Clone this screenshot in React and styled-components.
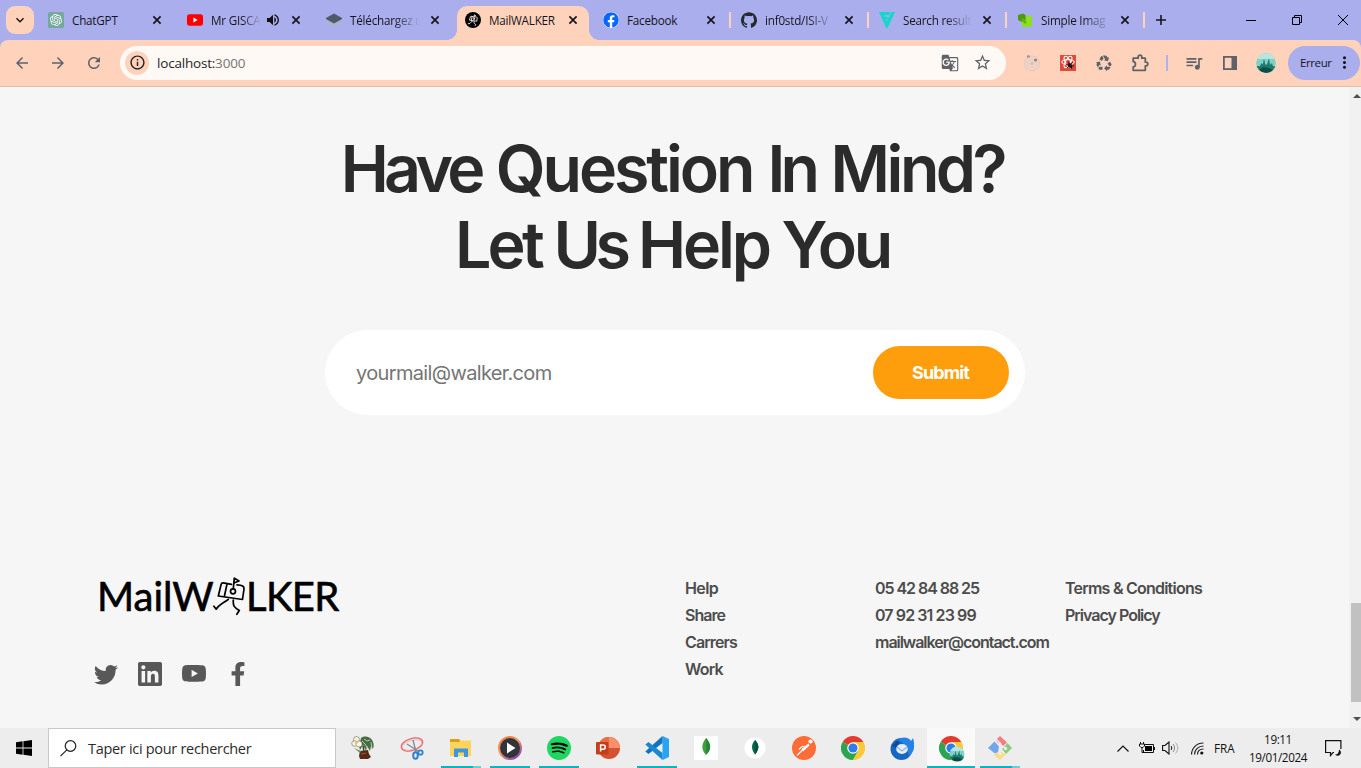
import React from "react";
import styled, { createGlobalStyle, css } from "styled-components";
import { SiOpenai, SiLinkedin, SiGithub, SiSpotify } from "react-icons/si";
import { FaFacebook, FaFacebookF } from "react-icons/fa";
import { BsTwitter, BsYoutube } from "react-icons/bs";
import {
  MdArrowBack, MdArrowForward, MdRefresh, MdInfoOutline, MdGTranslate, MdStarBorder,
  MdQueueMusic, MdMoreVert, MdRecycling, MdVolumeUp, MdExpandMore,
} from "react-icons/md";

const ui = `"Open Sans", "Noto Sans", sans-serif`;
const brand = `Inter, "Liberation Sans", sans-serif`;

const Global = createGlobalStyle`
  * { box-sizing: border-box; }
  html, body { margin: 0; height: 768px; overflow: hidden; }
  svg { display: block; flex: none; }
`;

const Screen = styled.div`
  width: 1361px; height: 768px; overflow: hidden;
  display: flex; flex-direction: column;
  background: #f6f6f6; font-family: ${ui}; color: #1f1f1f;
`;

/* tab strip */
const TabStrip = styled.div`
  height: 40px; flex: none; display: flex; align-items: stretch; overflow: hidden;
  background: #abaeed; padding-left: 6px;
`;
const TabSearch = styled.div`
  width: 28px; height: 28px; margin: 6px 6px 0 0; border-radius: 9px; background: #ffd3bb;
  display: flex; align-items: center; justify-content: center; color: #111; flex: none;
`;
const TabBox = styled.div`
  width: ${(p) => p.$w}px; flex: none; display: flex; align-items: center; position: relative; padding-left: 8px;
`;
const ActiveShape = styled.div`
  position: absolute; left: 0; top: 6px; width: 132px; height: 34px; background: #ffd3bb; border-radius: 10px 10px 0 0;
  &::before, &::after {
    content: ""; position: absolute; bottom: 0; width: 10px; height: 10px;
  }
  &::before { left: -10px; background: radial-gradient(circle at 0 0, transparent 9.6px, #ffd3bb 10px); }
  &::after { right: -10px; background: radial-gradient(circle at 100% 0, transparent 9.6px, #ffd3bb 10px); }
`;
const TabIcon = styled.div`
  width: 16px; height: 16px; flex: none; position: relative;
`;
const TabTitle = styled.div`
  width: ${(p) => p.$w}px; flex: none; margin-left: 8px; overflow: hidden; white-space: nowrap; position: relative;
  font-size: 11.7px; line-height: 18px; color: #15151c; letter-spacing: -0.22px;
  ${(p) => p.$fade && css`mask-image: linear-gradient(90deg, #000 62%, transparent);`}
`;
const TabTail = styled.div`
  display: flex; align-items: center; position: relative; margin-left: ${(p) => p.$ml ?? 7}px; color: #111;
`;
const TabSep = styled.div`
  width: 2px; height: 16px; background: #ffd3bb; margin-left: 10px;
`;
const NewTab = styled.div`
  width: 28px; flex: none; display: flex; align-items: center; justify-content: center;
`;
const WindowControls = styled.div`
  display: flex; flex: none; margin-left: 53px;
`;
const Control = styled.div`
  width: 46px; flex: none; display: flex; align-items: center; justify-content: center;
`;

/* toolbar */
const ToolbarWrap = styled.div`
  background: #abaeed; flex: none;
`;
const Toolbar = styled.div`
  height: 47px; display: flex; align-items: center; padding: 0 0 1px 4px;
  background: #ffd3bb; border-bottom: 1px solid #dcc0b1; border-radius: 8px 8px 0 0; color: #5f6368;
`;
const ToolCell = styled.div`
  width: ${(p) => p.$w || 36}px; height: 36px; flex: none; display: flex; align-items: center; justify-content: center; color: #5f6368;
`;
const AddressBar = styled.div`
  width: 886px; height: 34px; margin: 0 8px; flex: none; border-radius: 17px; background: #fff9f5;
  display: flex; align-items: center; padding: 0 8px 0 5px;
`;
const SiteInfo = styled.div`
  width: 24px; height: 24px; border-radius: 50%; background: #ffd3bb; color: #222; display: flex; align-items: center; justify-content: center;
`;
const Url = styled.div`
  flex: 1; margin-left: 8px; font-size: 13.5px; color: #1f1f1f; letter-spacing: -0.2px;
  span { color: #777472; }
`;
const ToolSep = styled.div`
  width: 18px; display: flex; justify-content: center;
  &::after { content: ""; width: 2px; height: 16px; background: #b0b0ea; }
`;
const Avatar = styled.div`
  width: 20px; height: 20px; border-radius: 50%; overflow: hidden;
`;
const ErrorPill = styled.div`
  width: 72px; height: 34px; border-radius: 17px; background: #abaeed; margin-left: 4px; flex: none;
  display: flex; align-items: center; padding-left: 12px; font-size: 11.5px; color: #15151c;
`;
const PillText = styled.span`
  width: 35px; letter-spacing: -0.4px;
`;

/* page */
const Viewport = styled.div`
  height: 641px; flex: none; display: flex;
`;
const Page = styled.main`
  width: 1349px; flex: none; font-family: ${brand};
`;
const Headline = styled.h1`
  margin: 44px 0 0; text-align: center; font-size: 64.5px; line-height: 76px; font-weight: 600; color: #2b2b2b;
`;
const HeadLine = styled.div`
  white-space: nowrap; letter-spacing: -4px; word-spacing: ${(p) => p.$ws}px; padding-right: 4px;
`;
const Word = styled.span`
  letter-spacing: ${(p) => p.$ls}px;
`;
const Form = styled.div`
  width: 700px; height: 85px; margin: 47px 0 0 325px; border-radius: 42.5px; background: #fff;
  display: flex; align-items: center; justify-content: space-between; padding: 0 16px 0 31px;
`;
const Placeholder = styled.span`
  font-size: 20px; color: #757575; letter-spacing: -0.65px; white-space: nowrap;
`;
const Submit = styled.div`
  width: 136px; height: 53px; border-radius: 26.5px; background: #ff9e0d; color: #fff; font-weight: 700; font-size: 18px;
  display: flex; align-items: center; justify-content: center; letter-spacing: -0.9px; padding-right: 1px;
`;
const Footer = styled.footer`
  display: flex; margin-top: 160px; padding-left: 94px;
`;
const FooterBrand = styled.div`
  width: 591px; flex: none;
`;
const Logo = styled.div`
  display: flex; align-items: center; height: 42px; padding-left: 3px; color: #000; font-family: Lato, "Open Sans", sans-serif; font-size: 40px; line-height: 42px;
  -webkit-text-stroke: 0.6px #000;
`;
const LogoPart = styled.span`
  width: ${(p) => p.$w}px; letter-spacing: ${(p) => p.$ls}px; white-space: nowrap;
`;
const Socials = styled.div`
  display: flex; gap: 20px; margin-top: 45px; color: #585858;
`;
const FooterCol = styled.div`
  width: 190px; font-size: 16px; line-height: 27px; font-weight: 600; color: #4c4c4c;
`;
const FooterLink = styled.div`
  white-space: nowrap; letter-spacing: ${(p) => p.$ls}px;
`;
const Scrollbar = styled.div`
  width: 12px; flex: none; background: #f1f1f1; display: flex; flex-direction: column; align-items: flex-end; padding-top: 6px;
`;
const Thumb = styled.div`
  width: 10px; height: 99px; background: #c1c1c1; margin: 504px 0 14px;
`;

/* taskbar */
const Taskbar = styled.div`
  height: 40px; flex: none; background: #ededed; display: flex; align-items: stretch;
`;
const StartCell = styled.div`
  width: 48px; display: flex; align-items: center; justify-content: center;
`;
const SearchBox = styled.div`
  width: 288px; border: 1px solid #c8c8c8; background: #fff; display: flex; align-items: center; padding-left: 11px;
  font-size: 14.5px; color: #2b2b2b; margin-right: 3px;
`;
const SearchText = styled.span`
  margin-left: 11px; white-space: nowrap; letter-spacing: -0.3px;
`;
const AppCell = styled.div`
  width: 48px; margin-right: 1px; flex: none; display: flex; flex-direction: column; align-items: center; padding-top: 8px;
  background: ${(p) => (p.$active ? "#f9f9f9" : "transparent")};
`;
const AppIcon = styled.div`
  height: 24px; display: flex; justify-content: center;
`;
const Running = styled.div`
  width: ${(p) => (p.$full ? 48 : 40)}px; height: 2px; margin-top: 6px;
  background: ${(p) => (p.$stack ? "linear-gradient(90deg, #00b7c3 32px, #66d0d4 32px)" : "#00b7c3")};
`;
const Tray = styled.div`
  flex: 1; display: flex; align-items: center; padding-left: 90px; font-size: 11.7px; color: #111;
`;
const TrayIcon = styled.div`
  width: ${(p) => p.$w}px; flex: none; display: flex; justify-content: center;
`;
const Lang = styled.div`
  margin-left: -2px; width: 24px;
`;
const Clock = styled.div`
  width: 80px; text-align: center; line-height: 18px; white-space: nowrap; letter-spacing: -0.4px; padding-bottom: 1px;
`;

const Close = () => (
  <svg width="16" height="16" viewBox="0 0 16 16"><path d="M4.400 4.400l7.200 7.200M11.600 4.400l-7.200 7.200" stroke="#15151c" strokeWidth="1.700" fill="none" /></svg>
);
const OpenAITile = () => (
  <svg width="16" height="16" viewBox="0 0 16 16"><rect width="16" height="16" rx="1.500" fill="#74a99b" /><SiOpenai x="2" y="2" size={12} color="#fff" /></svg>
);
const YouTubeMark = () => (
  <svg width="16" height="16" viewBox="0 0 16 16"><rect y="2.300" width="16" height="11.400" rx="2.600" fill="#f00" /><path d="M6.400 5.600v4.800l4.200-2.400z" fill="#fff" /></svg>
);
const LayersMark = () => (
  <svg width="16" height="16" viewBox="0 0 16 16"><path d="M0 7l8 4.500L16 7v2l-8 6-8-6z" fill="#aab4c4" /><path d="M8 1.500l8 4.500v1l-8 4.500L0 7V6z" fill="#4c5a69" /></svg>
);
const Walker = (props) => (
  <g fill="none" strokeLinejoin="round" strokeLinecap="round" {...props}>
    <path d="M18.500 8.300L10.200 6.800c-1.300-.1-1.800.5-2.100 1.700L5.300 20l24.200 3.500L31 13c.3-2.700-1.500-4-7-4.200M14 8l-2.700 12.800" />
    <circle cx="20" cy="15.300" r="2.500" /><path d="M20.300 12.600l1-10.500 4.700 2.900-4.500 1.700" />
    <path d="M15.300 23.300C12.500 26 6.500 28 3.200 33.200L.9 30.200M20.300 24c-.5 6 1 7.500 6 10.500l-2.500 3.800" />
  </g>
);
const WalkerFavicon = () => (
  <svg width="16" height="16" viewBox="0 0 16 16"><circle cx="8" cy="8" r="8" fill="#000" /><g transform="translate(2.900 2.200) scale(.3)"><Walker stroke="#f5e8df" strokeWidth="3" /></g></svg>
);
const VMark = () => (
  <svg width="16" height="16" viewBox="0 0 16 16" fill="#15d6cc"><path d="M0 0h11.500L10 3.200H5.200l.7 1.600h3.300L8 7.600H6.900l.7 1.600L12.500 0H16L8.600 16H7.200z" /></svg>
);
const ResizerMark = () => (
  <svg width="16" height="16" viewBox="0 0 16 16"><path d="M1 3l5-1.500L8.500 3 9 8l-3 2.500L1 8z" fill="#4c9a12" /><path d="M5 15V9.500L8.500 8l.5-4 1.500-1L12 5l1.500-2L15 5.500V14l-5 1z" fill="#8de01b" /><path d="M5 7l4 4" stroke="#5fb516" strokeWidth="2.500" /></svg>
);
const AvatarArt = ({ size = 20, ...rest }) => (
  <svg width={size} height={size} viewBox="0 0 20 20" {...rest}>
    <circle cx="10" cy="10" r="10" fill="#7fd0c6" /><path d="M1 6a10 10 0 0118 0z" fill="#b5e6df" />
    <path d="M.4 13L4 13l1.500-3 1.300 1.500L8 5.500l1.300 6h1.700L13 5l1 7 2-2 .8 3 2.700.5A10 10 0 01.4 13z" fill="#1e7a6d" />
    <path d="M3 17l4-3 6 1 4 2a10 10 0 01-14 0z" fill="#0b4e46" />
  </svg>
);
const OrbitMark = () => (
  <svg width="18" height="18" viewBox="0 0 18 18" fill="none"><circle cx="9" cy="9.500" r="7.300" stroke="#d9cdc8" strokeWidth="1.200" /><circle cx="9" cy="9.500" r="4.500" stroke="#d9cdc8" strokeWidth="1.100" /><circle cx="9" cy="9.500" r="2" fill="#c9c9cc" /><circle cx="5.300" cy="2.500" r="1.500" fill="#a39b98" /><circle cx="12.500" cy="6" r="1.600" fill="#8b8583" /></svg>
);
const ReactBug = () => (
  <svg width="16" height="16" viewBox="0 0 16 16"><rect width="16" height="16" fill="#dc4b3b" /><g fill="none" stroke="#fff" strokeWidth="1"><ellipse cx="8" cy="7" rx="6.300" ry="2.500" /><ellipse cx="8" cy="7" rx="6.300" ry="2.500" transform="rotate(60 8 7)" /><ellipse cx="8" cy="7" rx="6.300" ry="2.500" transform="rotate(-60 8 7)" /></g><ellipse cx="10" cy="10.500" rx="2" ry="2.800" fill="#2a1311" transform="rotate(-45 10 10.500)" /><path d="M6 9l3 1.500M7 13l2-2M12.500 7l-1.500 2M14 11h-3M12 14l-1-2M8 6.500l1.500 2" stroke="#2a1311" /></svg>
);
const Puzzle = () => (
  <svg width="18" height="18" viewBox="0 0 18 18"><path d="M2.200 4.200h5V3a1.800 1.800 0 013.600 0v1.200h3.500v4h.7a1.800 1.800 0 010 3.600h-.7v4.500H2.200v-3.500c3-.3 3-4.900 0-5.200z" fill="none" stroke="#5f6368" strokeWidth="1.800" strokeLinejoin="round" /></svg>
);
const SidePanel = () => (
  <svg width="14" height="14" viewBox="0 0 14 14"><rect x=".9" y=".9" width="12.200" height="12.200" fill="none" stroke="#5f6368" strokeWidth="1.800" /><path d="M8.500 0H14v14H8.500z" fill="#5f6368" /></svg>
);

const ChromeMark = ({ badge }) => (
  <svg width={badge ? 28 : 24} height={badge ? 26 : 24} viewBox={badge ? "-2 0 28 26" : "0 0 24 24"}>
    <path d="M12 12L1.600 6A12 12 0 0122.400 6z" fill="#e33b2e" />
    <path d="M12 12L1.600 6A12 12 0 0012 24l5.200-9z" fill="#2da44e" />
    <path d="M12 6h10.400A12 12 0 0112 24l5.200-9z" fill="#fcc934" />
    <circle cx="12" cy="12" r="5.800" fill="#fff" /><circle cx="12" cy="12" r="4.600" fill="#2f7de9" />
    {badge && <AvatarArt size={15} x="10.500" y="10.500" />}
  </svg>
);
const Plant = () => (
  <svg width="24" height="24" viewBox="0 0 24 24">
    <path d="M10 2c4-3 9-1 11 2 2 3 2 6 1 9l-2-3-1 5-3-5-1 5-3-6-3 5-1-4z" fill="#466c42" />
    <path d="M13 3l3 2 3-1M14 8l3 5M20 6l1 7M11 5l3 3" stroke="#b7cdb0" strokeWidth="1" fill="none" /><path d="M12 10l1 6" stroke="#31502d" strokeWidth="1.500" />
    <path d="M9 15l8-1 1 4 2 3-3 2H9l-1-3z" fill="#5a2a17" /><path d="M10 18l5-1" stroke="#a45b33" /><path d="M3 12l7 3-1 2z" fill="#6f944f" />
    <circle cx="5.500" cy="3.500" r="3" fill="#f4efe4" stroke="#77715c" strokeWidth=".6" /><circle cx="3.500" cy="7.500" r="2.800" fill="#f4efe4" stroke="#77715c" strokeWidth=".6" /><circle cx="8" cy="8" r="3" fill="#fff" stroke="#77715c" strokeWidth=".6" /><circle cx="5.500" cy="6.500" r="1.500" fill="#e8c64b" />
  </svg>
);
const Snip = () => (
  <svg width="24" height="24" viewBox="0 0 24 24" fill="none">
    <ellipse cx="12" cy="8.500" rx="11" ry="6" transform="rotate(-17 12 8.500)" stroke="#e8646a" strokeWidth="1.300" /><ellipse cx="12" cy="9" rx="10" ry="4.500" transform="rotate(-17 12 9)" stroke="#f3b2b4" strokeWidth=".8" />
    <path d="M13 4l3 12M7 8l11 7" stroke="#7d8890" strokeWidth="1.300" /><ellipse cx="15.500" cy="19.500" rx="2.300" ry="3.200" stroke="#2c82cc" strokeWidth="2" /><circle cx="20.500" cy="16.500" r="2.200" stroke="#2c82cc" strokeWidth="1.800" />
  </svg>
);
const Folder = () => (
  <svg width="24" height="24" viewBox="0 0 24 24"><path d="M1 3h9l1.500 2H22v3H1z" fill="#dd9f0c" /><path d="M1 6h9l2-1.500h10V20H1z" fill="#ffd45c" /><path d="M5 12.500h14V21h-4v-4.500H9V21H5z" fill="#3c97dc" /></svg>
);
const MediaPlayer = () => (
  <svg width="24" height="24" viewBox="0 0 24 24"><defs><linearGradient id="mp" x1="0" y1="0" x2=".7" y2="1"><stop offset="0" stopColor="#f0703a" /><stop offset=".5" stopColor="#f59b5e" /><stop offset="1" stopColor="#8345b0" /></linearGradient></defs><circle cx="12" cy="12" r="12" fill="url(#mp)" /><circle cx="12" cy="12" r="10" fill="#33343a" /><path d="M9 6.500v11l8.500-5.500z" fill="#fff" /></svg>
);
const SpotifyMark = () => (
  <svg width="24" height="24" viewBox="0 0 24 24"><circle cx="12" cy="12" r="11" fill="#000" /><SiSpotify size={24} color="#1ed760" /></svg>
);
const PowerPoint = () => (
  <svg width="24" height="24" viewBox="0 0 24 24"><circle cx="13" cy="12" r="11" fill="#d35230" /><path d="M13 1a11 11 0 0111 11H13z" fill="#ff8f6b" /><path d="M13 1a11 11 0 00-11 11h11z" fill="#ed6c47" /><rect y="6" width="12.500" height="12.500" rx="1" fill="#c43e1c" /><path d="M4.600 15.500V9h2.600a2 2 0 010 4.200H4.600" fill="none" stroke="#fff" strokeWidth="1.500" /></svg>
);
const VSCode = () => (
  <svg width="24" height="24" viewBox="0 0 24 24"><path d="M17.500 0L24 3v18l-6.500 3z" fill="#2aa3f0" /><path d="M17.500 0v7L3.500 18 .3 15.500z" fill="#0f74be" /><path d="M17.500 24v-7L3.500 6 .3 8.500z" fill="#1788d4" /></svg>
);
const LeafSquare = () => (
  <svg width="24" height="24" viewBox="0 0 24 24"><rect width="24" height="24" fill="#fff" /><path d="M12 2c5 5.500 6 11 .3 16.500L12 20l-.3-1.500C6.500 13 8 7 12 2z" fill="#3fa037" /><path d="M12 2c5 5.500 6 11 .3 16.500z" fill="#26853a" /></svg>
);
const LeafCircle = () => (
  <svg width="24" height="24" viewBox="0 0 24 24"><circle cx="12" cy="12" r="11" fill="#fff" stroke="#e4e4e4" strokeWidth=".5" /><path d="M12 4c4.500 5 4.500 9 0 14.500C8 13 8 9 12 4z" fill="#00684a" /><path d="M12 4c4.500 5 4.500 9 0 14.500z" fill="#08513d" /></svg>
);
const Postman = () => (
  <svg width="24" height="24" viewBox="0 0 24 24"><circle cx="12" cy="12" r="12" fill="#ff6c37" /><circle cx="18.500" cy="5.500" r="2.100" fill="#fff" /><path d="M16.500 7.500L9.500 13l1.500 2.500 6.500-6z" fill="#fff" /><path d="M10.500 14L5 19.500M12.500 10l-3 1L7 13.500" stroke="#fff" strokeWidth="1.200" fill="none" /></svg>
);
const Thunderbird = () => (
  <svg width="24" height="24" viewBox="0 0 24 24"><circle cx="11.500" cy="13" r="11" fill="#1766c2" /><path d="M8 4c4-4 11-3 13 1l2-3c2 7 2 14-4 18-1-7-5-13-11-16z" fill="#2482e6" /><path d="M1 9c2 0 4-1 5-4l4 1-4 6z" fill="#0f4b9d" /><ellipse cx="12" cy="13" rx="5.800" ry="5" fill="#e4eefa" /><path d="M7 11l5 4 5-4" stroke="#8fb2e0" strokeWidth="1.200" fill="none" /></svg>
);
const GitDiamond = () => (
  <svg width="24" height="24" viewBox="0 0 24 24"><path d="M12 0l7 6.500-4.500 4L10 7 8 4z" fill="#f57b81" /><path d="M6.500 5.500l4.500 5L10 16l-3 1.500L0 12z" fill="#74a5ec" /><path d="M19.500 7L24 12l-6 6-4-5z" fill="#8acb80" /><path d="M12 15l6 3.500L12 24l-6-5z" fill="#fddc82" /><path d="M8 3l4 4v12M12 8l6 5" stroke="#ededed" strokeWidth="1.500" fill="none" /><circle cx="12" cy="8" r="1.600" fill="#ededed" /><circle cx="12" cy="17.500" r="1.800" fill="#ededed" /><circle cx="17.500" cy="12.500" r="1.700" fill="#ededed" /></svg>
);
const Battery = () => (
  <svg width="16" height="12" viewBox="0 0 16 12"><path d="M5 2.500h9.500v8H4.500V8" fill="none" stroke="#111" /><path d="M6 4h7v5H6z" fill="#000" /><path d="M15 5h1v3h-1z" fill="#111" /><path d="M1.500 0v2M4.500 0v2M.5 2h5v2L4 5.500H2L.5 4zM3 5v5.500h2" fill="none" stroke="#111" /></svg>
);
const Speaker = () => (
  <svg width="17" height="14" viewBox="0 0 17 14" fill="none"><path d="M.6 4.500H3L7 1v12L3 9.500H.6z" stroke="#111" strokeWidth="1.100" /><path d="M9 5c1 1.200 1 2.800 0 4" stroke="#111" /><path d="M11 3c2 2.500 2 5.500 0 8" stroke="#888" /><path d="M13.500 1.500c3 3.500 3 7.500 0 11" stroke="#aaa" /></svg>
);
const Wifi = () => (
  <svg width="13" height="13" viewBox="0 0 13 13" fill="none" stroke="#222" strokeWidth="1.200"><path d="M.5 12.500C.5 6 5.500 1 12.500 1" /><path d="M3.500 12.500c0-5 4-8.500 9-8.500" /><path d="M6.500 12.500c0-3.500 2.500-5.500 6-5.500" /><circle cx="10.800" cy="11" r="1.600" fill="#111" stroke="none" /></svg>
);
const Notification = () => (
  <svg width="17" height="17" viewBox="0 0 17 17"><path d="M9 12.500H8l-2.500 3v-3H.6V.6h15.300V9" fill="none" stroke="#111" strokeWidth="1.200" /><path d="M14 9.500a3.300 3.300 0 11-4 5c2.500.3 4-1.500 4-5z" fill="#111" /></svg>
);

const tabs = [
  { w: 139, icon: <OpenAITile />, title: "ChatGPT" },
  { w: 139, icon: <YouTubeMark />, title: "Mr GISCA", fade: true, audio: true },
  { w: 139, icon: <LayersMark />, title: "Téléchargez u", fade: true },
  { w: 138, icon: <WalkerFavicon />, title: "MailWALKER", active: true },
  { w: 138, icon: <FaFacebook size={16} color="#0866ff" style={{ background: "#fff", borderRadius: 8 }} />, title: "Facebook", sep: true },
  { w: 138, icon: <SiGithub size={16} color="#24292f" />, title: "inf0std/ISI-V", fade: true, sep: true },
  { w: 138, icon: <VMark />, title: "Search result", fade: true, sep: true },
  { w: 138, icon: <ResizerMark />, title: "Simple Imag", fade: true, sep: true },
];

const apps = [
  { icon: <Plant /> }, { icon: <Snip /> }, { icon: <Folder />, run: true, stack: true }, { icon: <MediaPlayer />, run: true },
  { icon: <SpotifyMark />, run: true }, { icon: <PowerPoint /> }, { icon: <VSCode />, run: true }, { icon: <LeafSquare /> },
  { icon: <LeafCircle /> }, { icon: <Postman /> }, { icon: <ChromeMark /> }, { icon: <Thunderbird /> },
  { icon: <ChromeMark badge />, run: true, active: true }, { icon: <GitDiamond />, run: true, stack: true },
];

const footerColumns = [
  [["Help", -0.6], ["Share", -1], ["Carrers", -0.9], ["Work", -0.8]],
  [["05 42 84 88 25", -1.06], ["07 92 31 23 99", -0.9], ["mailwalker@contact.com", -1.03]],
  [["Terms & Conditions", -0.77], ["Privacy Policy", -1]],
];

export default function App() {
  return (
    <Screen>
      <Global />
      <TabStrip>
        <TabSearch><MdExpandMore size={16} /></TabSearch>
        {tabs.map((t) => (
          <TabBox key={t.title} $w={t.w}>
            {t.active && <ActiveShape />}
            <TabIcon>{t.icon}</TabIcon>
            <TabTitle $w={(t.audio ? 49 : 69) + t.w - 138} $fade={t.fade}>{t.title}</TabTitle>
            {t.audio && <TabTail $ml={4}><MdVolumeUp size={16} /></TabTail>}
            <TabTail><Close />{t.sep && <TabSep />}</TabTail>
          </TabBox>
        ))}
        <NewTab><svg width="12" height="12" viewBox="0 0 12 12"><path d="M6 1v10M1 6h10" stroke="#15151c" strokeWidth="1.600" /></svg></NewTab>
        <WindowControls>
          <Control><svg width="10" height="10" viewBox="0 0 10 10"><path d="M0 5.500h10" stroke="#000" /></svg></Control>
          <Control><svg width="10" height="10" viewBox="0 0 10 10"><path d="M.5 2.500h7v7h-7zM2.500 2.500v-2h7v7h-2" fill="none" stroke="#000" /></svg></Control>
          <Control><svg width="10" height="10" viewBox="0 0 10 10"><path d="M0 0l10 10M10 0L0 10" stroke="#000" /></svg></Control>
        </WindowControls>
      </TabStrip>
      <ToolbarWrap>
        <Toolbar>
          <ToolCell><MdArrowBack size={18} /></ToolCell>
          <ToolCell><MdArrowForward size={18} /></ToolCell>
          <ToolCell><MdRefresh size={18} /></ToolCell>
          <AddressBar>
            <SiteInfo><MdInfoOutline size={17} /></SiteInfo>
            <Url>localhost:<span>3000</span></Url>
            <ToolCell $w={32}><MdGTranslate size={18} /></ToolCell>
            <ToolCell $w={32}><MdStarBorder size={19} /></ToolCell>
          </AddressBar>
          <ToolCell><OrbitMark /></ToolCell>
          <ToolCell><ReactBug /></ToolCell>
          <ToolCell><MdRecycling size={18} /></ToolCell>
          <ToolCell><Puzzle /></ToolCell>
          <ToolSep />
          <ToolCell><MdQueueMusic size={20} /></ToolCell>
          <ToolCell><SidePanel /></ToolCell>
          <ToolCell><Avatar><AvatarArt /></Avatar></ToolCell>
          <ErrorPill><PillText>Erreur</PillText><MdMoreVert size={19} /></ErrorPill>
        </Toolbar>
      </ToolbarWrap>
      <Viewport>
        <Page>
          <Headline>
            <HeadLine $ws={3}>
              <Word $ls={-4.8}>Have</Word> <Word $ls={-3.1}>Question</Word> <Word $ls={-4.8}>In</Word> <Word $ls={-3.5}>Mind?</Word>
            </HeadLine>
            <HeadLine $ws={0.3}>
              <Word $ls={-3.8}>Let</Word> <Word $ls={-5.5}>Us</Word> <Word $ls={-3.1}>Help</Word> <Word $ls={-3.3}>You</Word>
            </HeadLine>
          </Headline>
          <Form><Placeholder>yourmail@walker.com</Placeholder><Submit>Submit</Submit></Form>
          <Footer>
            <FooterBrand>
              <Logo>
                <LogoPart $w={116} $ls={0}>MailW</LogoPart>
                <svg width="33" height="40" viewBox="0 0 33 40"><Walker stroke="#000" strokeWidth="1.700" /></svg>
                <LogoPart $w={100} $ls={-0.6}>LKER</LogoPart>
              </Logo>
              <Socials><BsTwitter size={24} /><SiLinkedin size={24} /><BsYoutube size={24} /><FaFacebookF size={24} /></Socials>
            </FooterBrand>
            {footerColumns.map((col) => (
              <FooterCol key={col[0][0]}>
                {col.map(([label, ls]) => <FooterLink key={label} $ls={ls}>{label}</FooterLink>)}
              </FooterCol>
            ))}
          </Footer>
        </Page>
        <Scrollbar>
          <svg width="10" height="6" viewBox="0 0 10 6"><path d="M2 5l4-4 4 4z" fill="#505050" /></svg>
          <Thumb />
          <svg width="10" height="6" viewBox="0 0 10 6"><path d="M2 1l4 4 4-4z" fill="#505050" /></svg>
        </Scrollbar>
      </Viewport>
      <Taskbar>
        <StartCell><svg width="16" height="16" viewBox="0 0 16 16"><path d="M0 2.200L6.600 1.300V7.600H0zM7.400 1.200L16 0v7.600H7.400zM0 8.400h6.600v6.300L0 13.800zM7.400 8.400H16V16l-8.600-1.200z" /></svg></StartCell>
        <SearchBox>
          <svg width="17" height="17" viewBox="0 0 17 17" fill="none" stroke="#222" strokeWidth="1.200"><circle cx="10.500" cy="6" r="5.300" /><path d="M6.800 9.800L.5 16.200" /></svg>
          <SearchText>Taper ici pour rechercher</SearchText>
        </SearchBox>
        {apps.map((a, i) => (
          <AppCell key={i} $active={a.active}>
            <AppIcon>{a.icon}</AppIcon>
            {a.run && <Running $full={a.active} $stack={a.stack} />}
          </AppCell>
        ))}
        <Tray>
          <TrayIcon $w={16}><svg width="12" height="7" viewBox="0 0 12 7"><path d="M.5 6.500L6 1l5.500 5.500" fill="none" stroke="#111" strokeWidth="1.200" /></svg></TrayIcon>
          <TrayIcon $w={32}><Battery /></TrayIcon>
          <TrayIcon $w={15}><Speaker /></TrayIcon>
          <TrayIcon $w={38}><Wifi /></TrayIcon>
          <Lang>FRA</Lang>
          <Clock><div>19:11</div><div>19/01/2024</div></Clock>
          <TrayIcon $w={30}><Notification /></TrayIcon>
        </Tray>
      </Taskbar>
    </Screen>
  );
}
